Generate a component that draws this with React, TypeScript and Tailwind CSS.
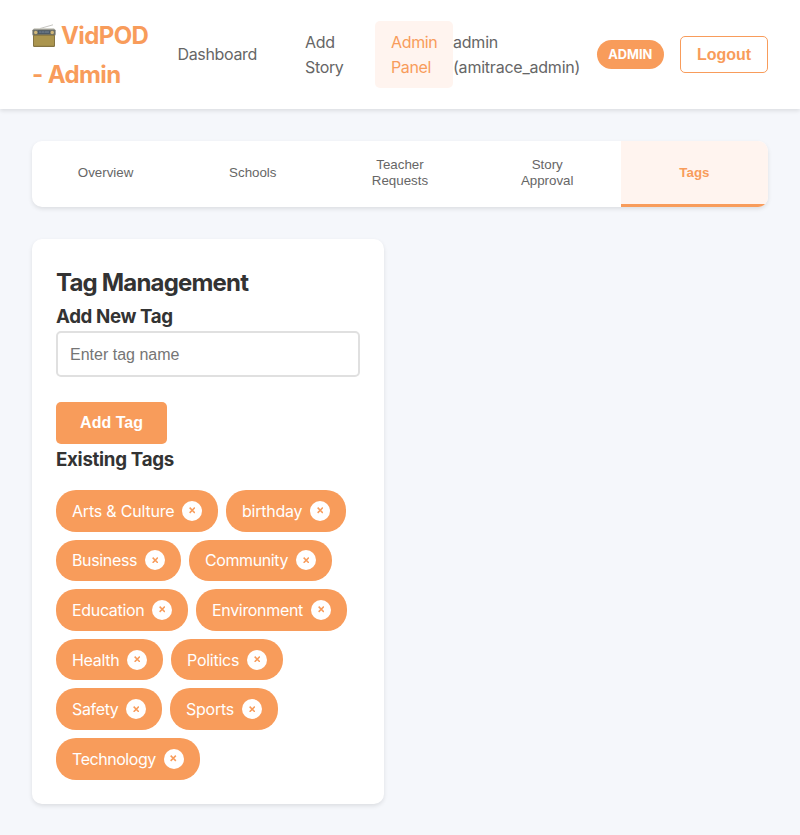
const tags = [
  { name: 'Arts & Culture', width: 'w-[162px]', tracking: 'tracking-[-0.2px]' },
  { name: 'birthday', width: 'w-[120px]', tracking: 'tracking-[-0.25px]' },
  { name: 'Business', width: 'w-[125px]', tracking: 'tracking-[-0.35px]' },
  { name: 'Community', width: 'w-[143px]', tracking: 'tracking-[-0.4px]' },
  { name: 'Education', width: 'w-[132px]', tracking: 'tracking-[-0.33px]' },
  { name: 'Environment', width: 'w-[151px]', tracking: 'tracking-[-0.33px]' },
  { name: 'Health', width: 'w-[107px]', tracking: 'tracking-[-0.3px]' },
  { name: 'Politics', width: 'w-[112px]', tracking: 'tracking-[-0.25px]' },
  { name: 'Safety', width: 'w-[106px]', tracking: 'tracking-[-0.35px]' },
  { name: 'Sports', width: 'w-[108px]', tracking: 'tracking-[-0.25px]' },
  { name: 'Technology', width: 'w-[143.5px]', tracking: 'tracking-[-0.45px]' },
];

const tabs = ['Overview', 'Schools', 'Teacher Requests', 'Story Approval', 'Tags'];

function RadioIcon() {
  return (
    <svg className="mr-[5px] inline-block h-6 w-6 align-[-4px]" viewBox="0 0 24 24" fill="none">
      <path d="M8 4.5 21 .8" stroke="#b9b8b2" strokeWidth=".8" />
      <path d="M2 4.2h20l1.4 2v4H.6v-4z" fill="#c9c7bd" />
      <rect x=".5" y="5.4" width="23" height="6.4" rx="1.2" fill="#6d6f68" />
      <rect x="6" y="6.4" width="12" height="3.5" fill="#4a5866" />
      <path d="M7 8.1h10M8 6.9v2M11 6.9v2M14 6.9v2M16 6.9v2" stroke="#8493a0" strokeWidth=".5" />
      <circle cx="3.7" cy="8.5" r="1.7" fill="#d0b779" />
      <circle cx="20.3" cy="8.5" r="1.7" fill="#d0b779" />
      <rect x="1" y="10.8" width="22" height="12.2" rx="1.2" fill="#857442" />
      <rect x="2" y="11.8" width="20" height="10" rx=".6" fill="#ab954e" />
    </svg>
  );
}

function Header() {
  return (
    <header className="relative flex h-[108.8px] items-center bg-white px-8 text-[#666] shadow-[0_2px_4px_rgba(0,0,0,0.1)]">
      <div className="w-[129.5px] shrink-0 pt-[2px] text-2xl leading-[39px] font-bold tracking-[-0.6px] whitespace-nowrap text-[#f89c5b]">
        <RadioIcon />VidPOD<br />- Admin
      </div>
      <nav className="flex shrink-0 items-center gap-4 tracking-[-0.35px]">
        <a className="w-[111.5px] px-4 py-2 whitespace-nowrap">Dashboard</a>
        <a className="w-[70px] px-4 pt-[9px] pb-[7px]">Add<br />Story</a>
        <a className="w-[78px] rounded-[5px] bg-[#fff4ef] px-4 pt-[9px] pb-[7px] text-[#f89c5b]">Admin<br />Panel</a>
      </nav>
      <div className="flex flex-1 items-center">
        <span className="w-[143.5px] shrink-0 pt-[2px] tracking-[-0.22px] whitespace-nowrap">admin<br />(amitrace_admin)</span>
        <span className="mr-4 flex h-[28.5px] w-[67.5px] shrink-0 items-center justify-center rounded-full bg-[#f89c5b] text-[12.8px] font-bold text-white">ADMIN</span>
        <button className="h-[36.5px] w-[88px] rounded-[5px] border border-[#f89c5b] pt-px font-['Liberation_Sans',sans-serif] text-base leading-[18px] font-bold text-[#f89c5b]">Logout</button>
      </div>
    </header>
  );
}

export default function App() {
  return (
    <div className="min-h-screen bg-[#f5f7fb] font-[Inter,sans-serif] text-base leading-[25.6px] text-[#333]">
      <Header />
      <main className="p-8">
        <div className="mb-8 grid h-[66px] grid-cols-5 overflow-hidden rounded-[10px] bg-white font-['Liberation_Sans',sans-serif] text-[13.333px] leading-4 text-[#666] shadow-[0_2px_4px_rgba(0,0,0,0.1)]">
          {tabs.map((tab) => (
            <button
              key={tab}
              className={
                tab === 'Tags'
                  ? 'border-b-[3px] border-[#f89c5b] bg-[#fff4ef] px-8 pt-[2px] font-bold text-[#f89c5b]'
                  : 'border-b-[3px] border-transparent px-8 pt-[2px]'
              }
            >
              {tab}
            </button>
          ))}
        </div>
        <section className="w-[352px] rounded-[10px] bg-white p-6 shadow-[0_2px_4px_rgba(0,0,0,0.1)]">
          <h2 className="pt-px text-2xl leading-[37.4px] font-bold tracking-[-0.82px]">Tag Management</h2>
          <h3 className="pt-px text-[18.72px] leading-[29px] font-bold tracking-[-0.38px]">Add New Tag</h3>
          <input
            className="mb-[24.6px] block h-[46px] w-full rounded-[5px] border-2 border-[#e0e0e0] px-3 pt-[2px] font-['Liberation_Sans',sans-serif] text-base placeholder:text-[#757575]"
            placeholder="Enter tag name"
          />
          <button className="block h-[42px] w-[111px] rounded-[5px] bg-[#f89c5b] font-['Liberation_Sans',sans-serif] text-base leading-[18px] font-bold text-white">Add Tag</button>
          <h3 className="mb-[16.3px] pt-px text-[18.72px] leading-[29px] font-bold tracking-[-0.3px]">Existing Tags</h3>
          <div className="flex flex-wrap gap-2">
            {tags.map(({ name, width, tracking }) => (
              <span key={name} className={`${width} flex h-[41.6px] items-center justify-between rounded-[20px] bg-[#f89c5b] px-4 whitespace-nowrap text-white`}>
                <span className={`${tracking} pt-[1.5px]`}>{name}</span>
                <button className="flex h-5 w-5 shrink-0 items-center justify-center rounded-full bg-white pb-px text-[#f89c5b]" aria-label={`Remove ${name}`}>
                  <svg className="h-[6.5px] w-[6.5px]" viewBox="0 0 6 6" stroke="currentColor" strokeWidth="1.4">
                    <path d="m.6.6 4.8 4.8M5.4.6.6 5.4" />
                  </svg>
                </button>
              </span>
            ))}
          </div>
        </section>
      </main>
    </div>
  );
}
